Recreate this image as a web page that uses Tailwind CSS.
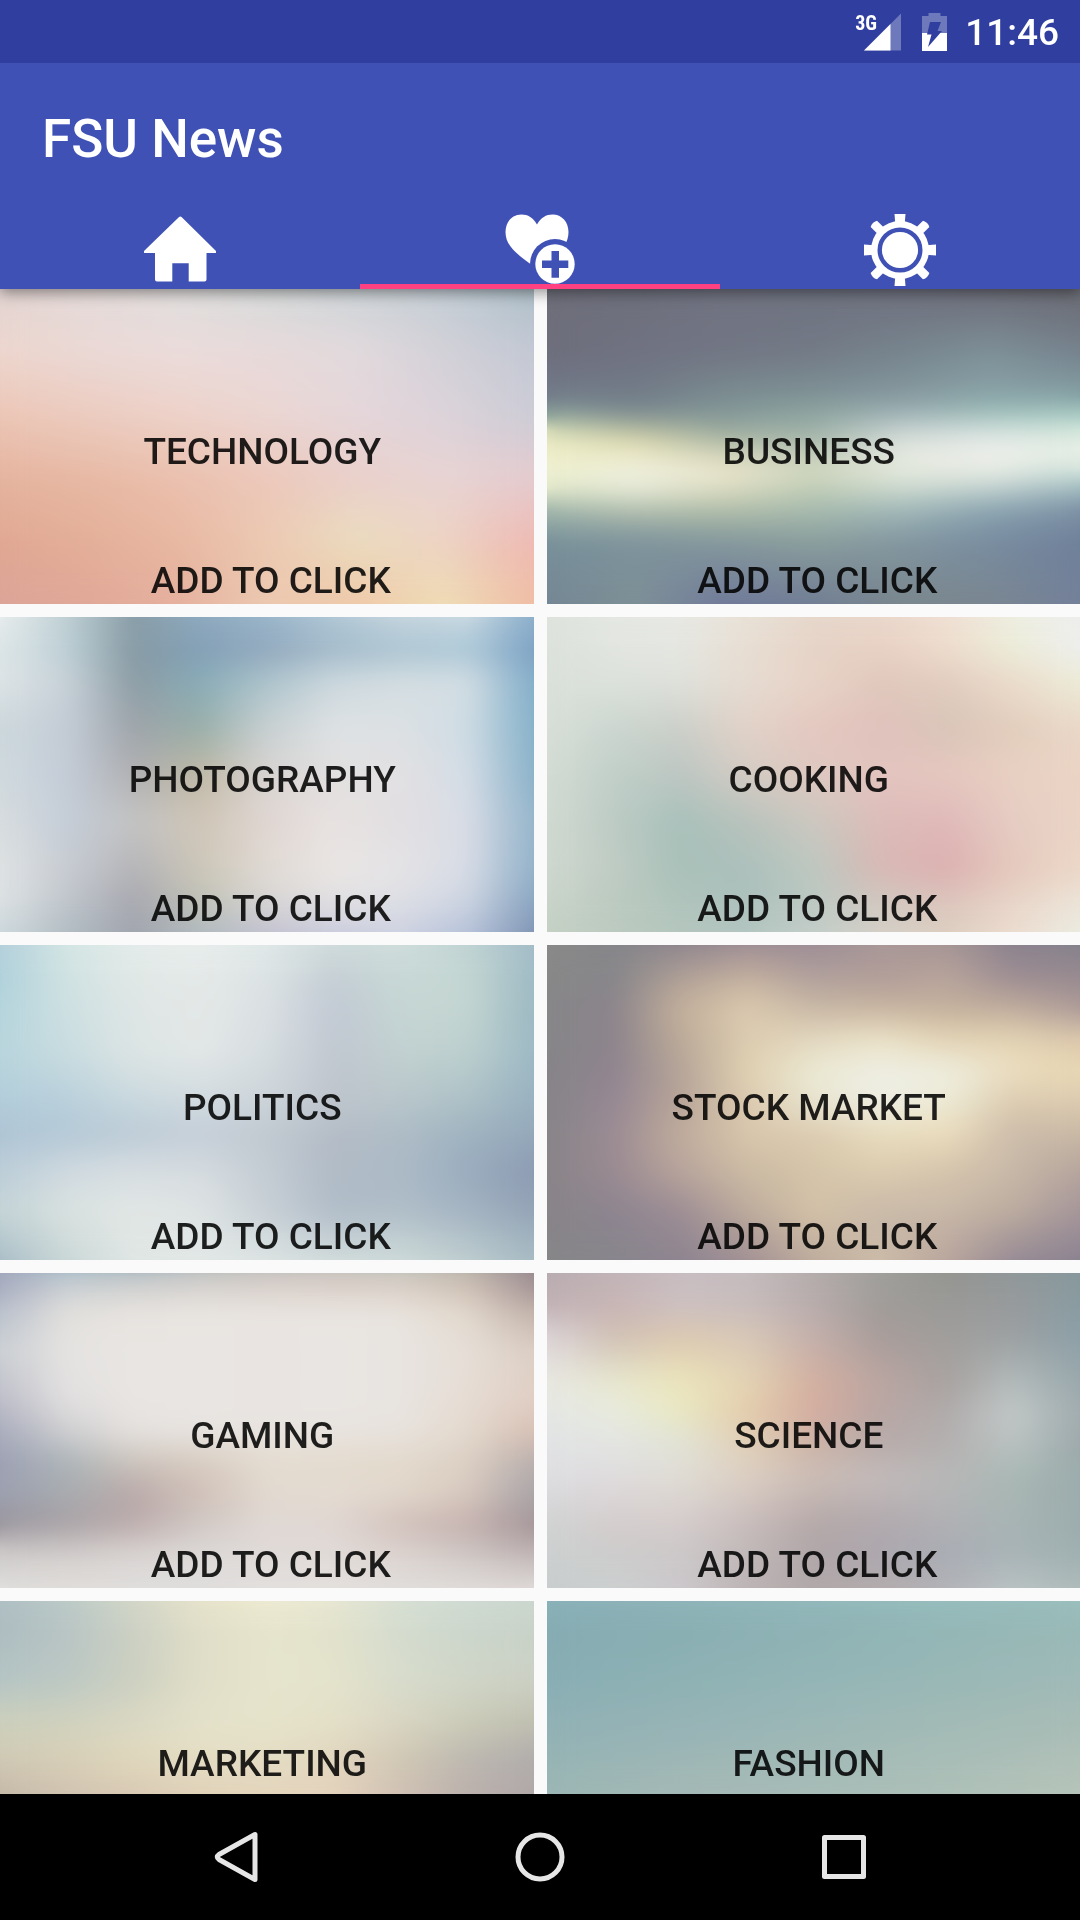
<!DOCTYPE html>
<html lang="en">
<head>
<meta charset="utf-8">
<meta name="viewport" content="width=device-width, initial-scale=1">
<title>FSU News</title>
<script src="https://cdn.jsdelivr.net/npm/@tailwindcss/browser@4"></script>
</head>
<body class="flex h-screen flex-col overflow-hidden bg-[#fafafa] font-[Roboto,sans-serif] font-medium">

<!-- Status bar -->
<div class="relative z-20 flex h-[63px] shrink-0 items-center justify-end bg-[#303f9f] pr-[21px] text-white">
  <div class="relative mr-[21px] h-[38px] w-[46px]">
    <span class="absolute top-0 left-0 text-[20px] leading-[20px] font-bold font-['Roboto_Condensed',Roboto,sans-serif]">3G</span>
    <svg class="h-[38px] w-[46px]" viewBox="855 12 46 38" fill="#fff" aria-hidden="true">
      <path d="M901 12.500V49.500H864z" fill-opacity=".3"/>
      <path d="M890.500 23V49.500H864z"/>
    </svg>
  </div>
  <svg class="mr-[17px] h-[38px] w-[26px]" viewBox="922 12 26 38" aria-hidden="true">
    <path d="M928.500 12h12v3h6.500v17h-25V15h6.500z" fill="#fff" fill-opacity=".3"/>
    <path d="M922 32h25v18h-25z" fill="#fff"/>
    <path d="M930 21h11l-3.500 9h4.500L928 46l3.500-12.500H927z" fill="#303f9f"/>
  </svg>
  <time class="pt-[2px] text-[37px] leading-[44px]">11:46</time>
</div>

<!-- App bar with tabs -->
<header class="relative z-10 shrink-0 bg-[#3f51b5] text-white shadow-[0_3px_14px_rgba(0,0,0,0.45)]">
  <h1 class="flex h-[147px] items-center px-[42px] pt-[5px] text-[53px] leading-[62px]">FSU News</h1>
  <nav class="grid grid-cols-3" aria-label="Sections">
    <button class="flex h-[79px] justify-center pt-1" aria-label="Home">
      <svg class="size-[72px]" viewBox="144 214 72 72" fill="#fff">
        <path d="M178.800 217.200q1.500-1.400 3 0L216 251q1.200 2-1 2H206.500V279.500q0 2-2 2H188.700V263.300H172.300V281.500H157q-2 0-2-2V253H145q-2 0-1-2z"/>
      </svg>
    </button>
    <button class="flex h-[79px] justify-center overflow-hidden border-b-[5px] border-[#ff4081] pt-1" aria-label="Favourites">
      <svg class="size-[72px] shrink-0" viewBox="504 214 72 72">
        <path d="M537 224.500C533 217.500 528 214.500 521.500 214.500C512 214.500 505.500 222 505.500 232C505.500 246 517 254 530.500 264L537 270L546 262C558 254 568.500 246 568.500 232C568.500 222 562 214.500 552.500 214.500C546 214.500 541 217.500 537 224.500z" fill="#fff"/>
        <circle cx="555" cy="264" r="25" fill="#3f51b5"/>
        <circle cx="555" cy="264" r="19.700" fill="#fff"/>
        <path d="M551.500 251h7.500v9.500h9.300v7.500h-9.300v9.700h-7.500v-9.700h-9.500v-7.500h9.500z" fill="#3f51b5"/>
      </svg>
    </button>
    <button class="flex h-[79px] justify-center pt-1" aria-label="Settings">
      <svg class="size-[72px]" viewBox="-36 -36 72 72" fill="#fff">
        <path d="M-5.500-36h11l-.800 10h-9.400z"/>
        <path d="M-5.500-36h11l-.800 10h-9.400z" transform="rotate(90)"/>
        <path d="M-5.500-36h11l-.800 10h-9.400z" transform="rotate(180)"/>
        <path d="M-5.500-36h11l-.800 10h-9.400z" transform="rotate(270)"/>
        <path d="M-4.500-37q4.500-2.500 9 0v10h-9z" transform="rotate(45)"/>
        <path d="M-4.500-37q4.500-2.500 9 0v10h-9z" transform="rotate(135)"/>
        <path d="M-4.500-37q4.500-2.500 9 0v10h-9z" transform="rotate(225)"/>
        <path d="M-4.500-37q4.500-2.500 9 0v10h-9z" transform="rotate(315)"/>
        <circle r="29"/>
        <circle r="20.300" fill="none" stroke="#3f51b5" stroke-width="4.400"/>
      </svg>
    </button>
  </nav>
</header>

<!-- Category tiles -->
<main class="min-h-0 flex-1 overflow-hidden">
  <div class="grid grid-cols-2 gap-[13px] text-center text-[37px] leading-[44px] text-black/87">
    <section data-mesh="technology" class="relative isolate flex h-[315px] flex-col pt-[141px]">
      <h2 class="pr-[9px]">TECHNOLOGY</h2><button class="mt-[85px] pl-2">ADD TO CLICK</button>
    </section>
    <section data-mesh="business" class="relative isolate flex h-[315px] flex-col pt-[141px]">
      <h2 class="pr-[9px]">BUSINESS</h2><button class="mt-[85px] pl-2">ADD TO CLICK</button>
    </section>
    <section data-mesh="photography" class="relative isolate flex h-[315px] flex-col pt-[141px]">
      <h2 class="pr-[9px]">PHOTOGRAPHY</h2><button class="mt-[85px] pl-2">ADD TO CLICK</button>
    </section>
    <section data-mesh="cooking" class="relative isolate flex h-[315px] flex-col pt-[141px]">
      <h2 class="pr-[9px]">COOKING</h2><button class="mt-[85px] pl-2">ADD TO CLICK</button>
    </section>
    <section data-mesh="politics" class="relative isolate flex h-[315px] flex-col pt-[141px]">
      <h2 class="pr-[9px]">POLITICS</h2><button class="mt-[85px] pl-2">ADD TO CLICK</button>
    </section>
    <section data-mesh="stocks" class="relative isolate flex h-[315px] flex-col pt-[141px]">
      <h2 class="pr-[9px]">STOCK MARKET</h2><button class="mt-[85px] pl-2">ADD TO CLICK</button>
    </section>
    <section data-mesh="gaming" class="relative isolate flex h-[315px] flex-col pt-[141px]">
      <h2 class="pr-[9px]">GAMING</h2><button class="mt-[85px] pl-2">ADD TO CLICK</button>
    </section>
    <section data-mesh="science" class="relative isolate flex h-[315px] flex-col pt-[141px]">
      <h2 class="pr-[9px]">SCIENCE</h2><button class="mt-[85px] pl-2">ADD TO CLICK</button>
    </section>
    <section data-mesh="marketing" class="relative isolate flex h-[315px] flex-col pt-[141px]">
      <h2 class="pr-[9px]">MARKETING</h2>
    </section>
    <section data-mesh="fashion" class="relative isolate flex h-[315px] flex-col pt-[141px]">
      <h2 class="pr-[9px]">FASHION</h2>
    </section>
  </div>
</main>

<!-- System navigation -->
<footer class="relative z-10 flex h-[126px] shrink-0 items-center justify-center bg-black">
  <button class="flex w-[304px] justify-center" aria-label="Back">
    <svg class="size-[54px]" viewBox="209 1830 54 54" fill="none" stroke="#e6e6e6" stroke-width="5" stroke-linejoin="round"><path d="M255 1834.500V1879.500L219 1859.500Q215.500 1857 219 1854.500z"/></svg>
  </button>
  <button class="flex w-[304px] justify-center" aria-label="Overview home">
    <svg class="size-[54px]" viewBox="0 0 54 54" fill="none" stroke="#e6e6e6" stroke-width="5"><circle cx="27" cy="27" r="22"/></svg>
  </button>
  <button class="flex w-[304px] justify-center" aria-label="Recent apps">
    <svg class="size-[54px]" viewBox="0 0 54 54" fill="none" stroke="#e6e6e6" stroke-width="5" stroke-linejoin="round"><path d="M7.500 7.500h39v39h-39z"/></svg>
  </button>
</footer>

<script>
// Each mesh is a list of rows: vertical stop in percent, then evenly spaced colours from left to right.
const meshes = {
  technology: `0 e2d4d2 e3dad8 e0dddd d6dada ccd3d7 c3cdd5 aebfc8
20 edd6ce ebd9d6 ebdcdb e8dadb e2dadd d3d1d8 c3c8d4
40 ecc6b6 ecccc0 edd2c9 ebd6d2 e5d6da dcd3da ccccd6
60 e5b49f e7b9a4 ebc0ae ecc8bb ead0cb e8d4d4 e4cbcf
80 e0a892 e4af99 e8b8a2 ecc9b2 ebdcbf edd3c4 eeb9b3
100 dba498 e0a898 e5b09e ebc8b0 efc8a8 eedcb4 efbda4`,
  business: `0 6f6f7a 6e707c 707280 6f7280 6f707e 6c6c78 6a6a72
20 6e6e7c 707282 727684 737a86 76848e 7e9098 76828e
34 727a8a 727c88 7a8c90 7e9296 86999e 8aa4a8 84a0a4
40 84a098 7a8c92 869a9a 92a8a2 a0b4b8 a0c2bc a8cdc4
45 e2e4ba c0c4a0 98a89c 9cb0a8 ccd6d4 d8e4e0 d4e8dc
51 eeedc8 ece6bc c8ccb0 b8c4b4 e4e8e0 eeeeec eaf0e8
57 eef0d0 eeefe0 eee8d0 d8dcc4 e8ebe0 eef0e8 d8e8de
63 e8eccc ecefdc e0dec4 c0ccb4 d0dcd0 c4d4d0 a0bcc0
70 a0b6aa b4c0ac b0bea8 a8bcb0 a0b8b8 8aa4b0 7c90a4
80 78909a 7c929c 84989c 8a9e9c 8296a0 788ca0 6f809a
100 748694 7e9096 70789a 707c94 7a868c 7a8690 74809a`,
  photography: `0 eaeeee c0d0d4 8a9ea8 90acc0 9cb8cc b4cad8 cad8e0 d0dde4 8cb0cc
10 dde6e8 bccfd6 869aa4 829eb6 90a6bc a0b8c8 a8c2d0 a8c6d6 7ca0c2
20 dfe5e7 c8d2d8 8c9ca4 88acb8 acc4cc ccd8de d4dee2 d4dee4 80acc8
35 ccd8dc c4ccd6 9ea4aa 98aea8 c8d0d2 dee2e4 dce1e4 cedce4 84b0c8
50 d0dade c4ccd8 b0b0b2 bfb8a4 d8d4d2 e2e0e0 e2e0e2 d4dde6 88b0c8
65 d8dddf c4cdd8 c4c4c4 d0c6b8 e0d6d2 e8e2e1 e2dfe2 d9dde6 94b4ca
80 dfe3e4 c8ccd2 b4b4b8 ccc6b8 e0dad4 eae6e4 e4e3e5 d8dce6 90b0c8
90 dee3e5 c0c6cc a8a8b0 c0c2b6 d8d6d4 e2e0e2 dfe0e6 ced6e2 88a4c0
100 ccd8dc b0bcc2 a0a4ae b0bac0 c0c0d0 c8cadc ccd0e0 b4c0d8 8094b4`,
  cooking: `0 dfe3dd e4e8e2 e8e8e4 e8e2d8 e6d8cc ead8cc efe0d4 eeeee2 eeeeee
10 dbe1db e2e5e0 e4e6e0 e8ddd2 e6d2c6 e8d0c4 eedccc ebedd8 eeeeee
20 dae0da dde2dc e0e2dc e6dcd2 e8d4c8 e0c8bc e2cdc0 ecdccc ecedd8
35 d8dfd8 ccd6d0 cccfc9 e2d2c8 e4c8c0 e0c2bc d8c4b8 e2cdbc ead8c8
50 d4dcd4 c0cfc8 bcc6c2 d4ccc4 dec8c0 e4c4c0 e6c8c0 e8d0c2 ead4c4
65 d2dad2 bccbc4 a8c0ba b8c2bc ccc8c0 dcbcb8 dfb8b8 e6cdc4 ead4c6
80 cfd8cf c0ccc4 a8c0b8 acc0bc bcc8c0 d8b8b4 dcb0b0 e4c8bc ecd8c8
90 cad4ca bccac0 b0c4bc acc0bc bcc8c2 d0c8c0 dcc4bc e8d4c8 ece4d8
100 c4d0c4 bccac0 b4c6be b4c6c0 c4ceca d4d0c8 dccfc0 ecddd0 ebece2`,
  politics: `0 b4d0dc d4e6e4 e4ecea e8eeec e0e8e8 d0dcdc d0dedc c0d4d4 a4bcc8
10 aed0da d0e2e2 e0e8e6 e4e9e8 dce3e4 c4ced4 c8d8d6 c4d6d2 9ebac4
20 b4d4dc cee0e2 dee6e5 e4e8e7 dae0e3 c2c9d4 c6d6d4 c4d6d2 9cb8c2
35 b8d4dc c8dce0 dce4e4 e2e7e7 d6dde0 c0c7d0 c2d0d0 bccfce 9cb8c4
50 b2ccda b8cfdb c8d8de d0dadf ccd4da bec4cc b8c6cb acc0c6 98b0bf
60 aec4d4 b4c8d6 bccad6 c4ced8 c0c8d0 b4bcc6 aebcc6 9fb3c0 94a8ba
72 bccdd8 d0dae0 d8dfe2 d6dce0 c4ccd4 b0bbc6 acbac6 9aacbe 8c9ab2
85 c4d4d6 dae2e0 e2e7e5 dee4e4 c8d0d6 b0bcc8 b0bec8 a4b4c2 94a4b6
100 a8bcc6 c8d6d6 dfe6e4 e2e8e6 dde4e3 d4dedd d0dcda c0cfd0 a8bcc4`,
  stocks: `0 8a8a8a 86868a 8c848e 9a8a94 9c8c96 a89898 a49494 8a828e 84828c
10 888888 86868a b0a096 c4b09e b0a09c b09c98 b8a49c 9c8c92 988a90
20 868688 8c848c c4b09c dccab0 c8b8a4 c8b4a0 c4b09c c0ac9c ac9a98
30 868688 8c848c bcaa98 dcccb0 e4d8c0 ece4c8 e4d4b4 e4d4b4 dcc8ac
40 868488 908490 b4a498 e0d0b0 ebead4 eeeee4 eeeee0 ecdec0 e8d8b4
50 868488 968894 b8a498 dccab0 e8e4d0 eeeee4 ecead4 dccbb0 dccab0
60 868488 9c8c94 c0ac9c d8c6ac dccbb0 e8dcbc ecdcbc ccbcaa c8b8a4
72 888488 9a8a92 b8a49c ccbba4 d4c4a8 dcccb0 d4c4ac c8b8a8 b4a49c
85 888488 8c8490 9c8c94 bcaa9c d4c2a8 c8b8a8 c8b8a8 bcac9f a4949a
100 868688 88868c 8c8490 a08f94 bcaa9c ccbca8 b8a49c 948894 8a8290`,
  gaming: `0 a0a8bc a8bcc8 a8b8c0 b8bcbc c0bebc c4c0bc c0c4bc b8b4ac 988a90
5 a8acc0 ccd0d4 d4d2d0 d8d4d0 dcd2cc dccfc8 dccfc6 d0c0b4 a49496
12 b8c0cc e2e0dc e8e4e0 e9e5e1 e9e5e1 e9e5e1 e8e4de e2d8cc c0b0a8
25 ccd0d4 e6e4e2 e8e5e2 e9e5e2 e9e4e1 e9e5e2 e8e4e0 e6dfd8 dccfc4
40 bcbcc8 e2e0e0 e8e5e2 e9e5e2 e9e4e1 e9e5e2 e8e4e0 e6dcd4 e0cec4
50 a8acbc d0d0d2 e6e2df e8e5e2 e8e4e0 e8e4e0 e8e3de e4dace d8c0b4
60 9ca0b4 acb4b8 ccc4bc d8ccc0 e4dcd0 e4dbce e3d9cc dccfc4 b8aeac
70 9ca0b0 a8acb0 b8a8a8 d0c0b8 e2d9d0 e4dbd2 e2d8cc d8c9be a8a4a8
80 98949c a8a0a4 bcacac d0c8c4 e0d8d4 e0d6d2 d0bfba c4b0ae a49498
88 ccc8c8 d0ccca d8d2d0 dcd8d6 e0dad8 e0dad6 dcd2ce ccc4c0 bcb0b0
100 e0e0de e2dfdc e0dfde dfdedd e2dfdd e3dfdd e0dedc e2dedc e0dcda`,
  science: `0 b8acb0 c0b4b8 c8bcc0 c4bcbe b4acac a0a09c 94948f 90989a 88989c
10 c0b0b4 c8b4b4 ccc0c2 c8bcbc b8acac a09c98 9a9a98 989a9c 889ca2
20 dcd4d8 d0c0b4 dcc8b0 d8c8b8 c4b0ac a89c9a a09e9c 9ca0a2 8ca0a8
35 e8e8e2 e8e8d0 ece6bc e4d4b4 d4b0a0 bca6a2 a8a2a0 b4bcbc 9aa8ac
45 e4e6e4 e8ebe0 e8e8c4 e4ccac d4aca0 b8a6a4 b0acac c4c9c9 a0acae
55 e0e2e4 e2e4e2 e0e2d8 e0d0b8 ccb4a8 b8acaa b4b0b0 b8c2c0 9ca8aa
65 dedde0 e0dcde e0dcd4 dccfc4 ccbdb6 c4bcbc b8b8b8 a8b8b4 9cacac
80 d0d2d2 d4cccc d4cccc c8bcbc b4a8a8 b0a8ac b0b0b4 a8b4b4 9cacac
90 ccd0d0 cccccc ccc8c8 c0b8b8 b0a6a8 aca8b0 a8acb4 a8b4b8 a0b0b0
100 c8cccc ccd0d0 ccc8cc bcb4b4 b0a8a8 b4acac b4b4b8 bcc4c4 b0bcbc`,
  marketing: `0 b0c0c4 bcccc8 d4d8c8 e8e4cc f0ecd4 e8e8d4 d8e0d4 d0dcd4 ccd8d0
8 acbcc0 b8c4c4 ccd0c4 e0dec8 e6e4cc e2e2cc d4dccf ccd6cc c8d2c8
25 b4c4c4 bcc8c4 ccd0c0 e0dec8 e6e4cc e4e3cc d8dccc d0d6c8 ccd0c4
38 ccd0bc d0d2be dad8c4 e4e1ca e6e4cc e4e0c8 dad6c4 ccccb8 c0c0b0
50 d0c9b4 d8d0b8 e0d8bc e4dec4 e4ddc4 e2d6bf d0c8b4 bcb8b0 b0acac
61 c4b8a8 d0c2b0 d8c8b4 e0d0b8 e4d4bc e4d2bc d0c0b4 bcb0ac b0a8a8
100 b8aca4 c4b4a8 ccbcac d4c4b0 d8c8b4 d4c4b4 c4b4ac b4a8a8 a8a0a4`,
  fashion: `0 8cb2ba 90b6ba 94babc 98bebe 9cc0be
8 86acb3 89aeb3 8eb2b5 93b6b6 98b9b6
25 88aeb4 8eb2b4 94b5b6 99b8b6 a0bab8
38 90b1b5 96b3b6 9bb7b7 a2bab6 a8bcb6
61 9cb6b4 a4b9b5 a8bcb6 aec0b8 b6c4ba
100 a8bcb4 b0c0b6 b6c4b8 bcc8ba c4ccc0`
};

// Every row fades in over the one above it, which blends the colours in both directions;
// a blurring sheet on top softens the seams between rows.
document.querySelectorAll('[data-mesh]').forEach(tile => {
  const backdrop = document.createElement('div');
  backdrop.className = 'absolute inset-0 -z-10 overflow-hidden';
  let above = null;
  meshes[tile.dataset.mesh].split('\n').forEach(line => {
    const [stop, ...colours] = line.trim().split(' ');
    const row = document.createElement('div');
    row.className = 'absolute inset-0';
    row.style.backgroundImage = `linear-gradient(to right, ${colours.map(c => '#' + c).join(', ')})`;
    if (above !== null) row.style.maskImage = `linear-gradient(transparent ${above}%, #000 ${stop}%)`;
    backdrop.append(row);
    above = stop;
  });
  const sheet = document.createElement('div');
  sheet.className = 'absolute inset-0 backdrop-blur-md';
  backdrop.append(sheet);
  tile.prepend(backdrop);
});
</script>
</body>
</html>
